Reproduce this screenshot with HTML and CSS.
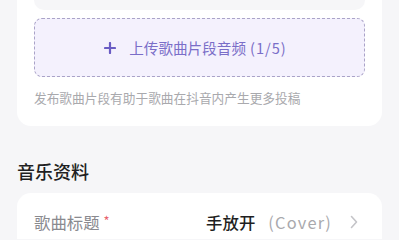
FILE: index.html
```html
<!DOCTYPE html>
<html lang="zh">
<head>
<meta charset="utf-8">
<link rel="stylesheet" href="styles.css">
</head>
<body>
<div class="page">
  <div class="card upload-card">
    <div class="prev-box"></div>
    <div class="upload-box">
      <svg class="plus" width="12" height="12" viewBox="0 0 12 12"><path d="M6 1v10M1 6h10" stroke="currentColor" stroke-width="2.2" stroke-linecap="round"/></svg>
      <span class="upload-text">上传歌曲片段音频<span class="count">(1/5)</span></span>
    </div>
    <div class="hint">发布歌曲片段有助于歌曲在抖音内产生更多投稿</div>
  </div>
  <div class="section-title">音乐资料</div>
  <div class="card info-card">
    <div class="row">
      <div class="label">歌曲标题<span class="req">*</span></div>
      <div class="value"><span class="main">手放开</span><span class="sub">(Cover)</span></div>
      <svg class="chev" width="8" height="14" viewBox="0 0 8 14"><path d="M1.5 1.5l5 5.5-5 5.5" fill="none" stroke="currentColor" stroke-width="1.6" stroke-linecap="round" stroke-linejoin="round"/></svg>
    </div>
  </div>
</div>
</body>
</html>
```
FILE: styles.css
```css
html, body {
  margin: 0;
  padding: 0;
}
body {
  background: #f6f6f8;
  font-family: "Noto Sans CJK SC", "Noto Sans", sans-serif;
  width: 399px;
  height: 239px;
  overflow: hidden;
}
.page {
  padding: 0 17px;
}
.card {
  background: #ffffff;
  border-radius: 14px;
}
.upload-card {
  border-radius: 0 0 14px 14px;
  padding: 0 17px 19px;
}
.prev-box {
  height: 10px;
  background: #f6f6f8;
  border-radius: 0 0 10px 10px;
}
.upload-box {
  margin-top: 8px;
  height: 57px;
  border: 1px dashed #aaa3c8;
  border-radius: 8px;
  background: #f4f1fd;
  display: flex;
  align-items: center;
  justify-content: center;
  gap: 13px;
  color: #6a5cc4;
}
.plus {
  display: block;
  margin-left: -8px;
}
.upload-text {
  font-size: 14.6px;
  line-height: 20px;
  color: #7a6ec8;
}
.count {
  margin-left: 4px;
  letter-spacing: 1px;
}
.hint {
  margin-top: 12px;
  font-size: 12.7px;
  line-height: 18px;
  color: #a9a9ad;
}
.section-title {
  margin-top: 32px;
  font-size: 18px;
  line-height: 26px;
  font-weight: 500;
  color: #1f1f22;
}
.info-card {
  margin-top: 9px;
}
.row {
  display: flex;
  align-items: center;
  height: 58px;
  padding: 0 24px 0 17px;
}
.label {
  font-size: 16.4px;
  color: #8a8a8f;
  flex: 1;
}
.req {
  color: #e8646e;
  font-size: 13px;
  margin-left: 4px;
  position: relative;
  top: -3px;
}
.value {
  font-size: 16.4px;
  margin-right: 18px;
}
.value .main {
  color: #1f1f22;
  font-weight: 500;
}
.value .sub {
  color: #a9a9ad;
  margin-left: 13px;
  letter-spacing: 1.2px;
}
.chev {
  display: block;
  color: #c4c4c8;
}
```
